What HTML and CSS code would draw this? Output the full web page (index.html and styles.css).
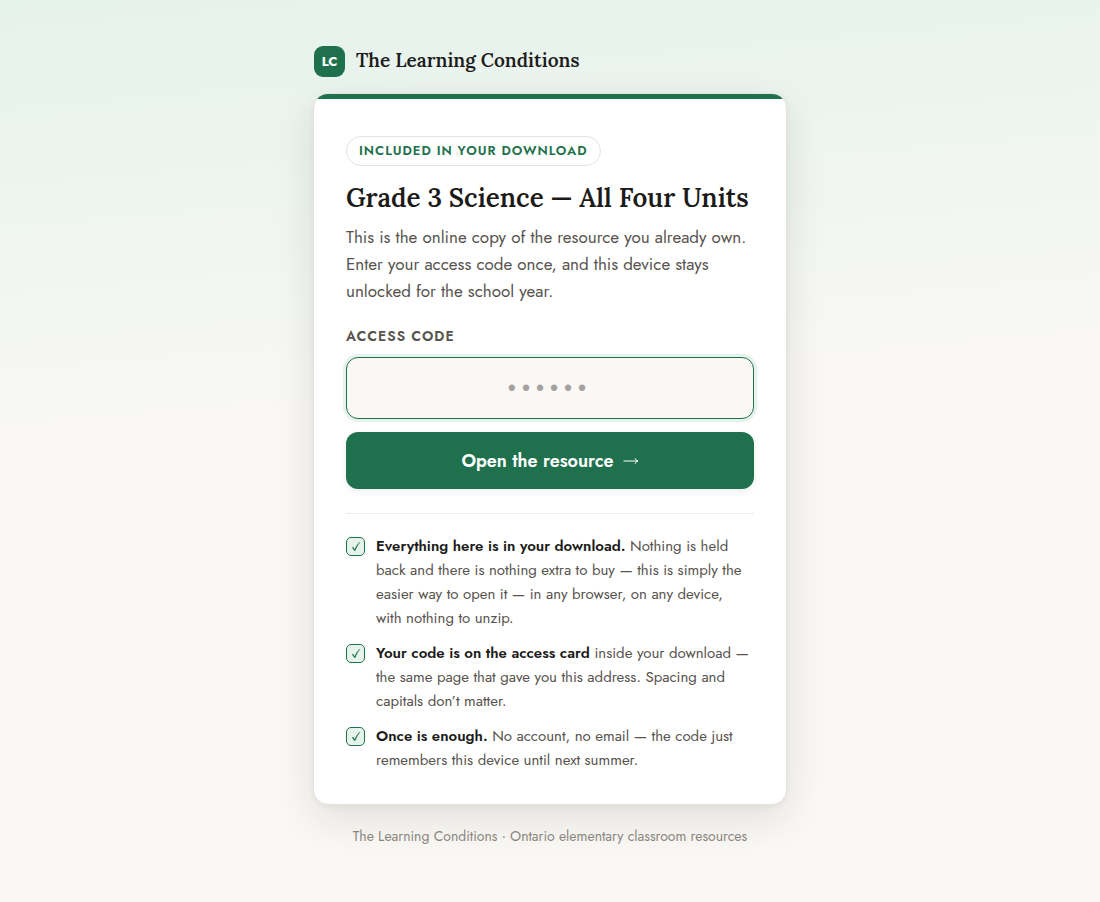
FILE: index.html
```html
<!DOCTYPE html>
<html lang="en">
<head>
<meta charset="utf-8">
<meta name="viewport" content="width=device-width, initial-scale=1">
<title>The Learning Conditions</title>
<link rel="stylesheet" href="styles.css">
</head>
<body>
<div class="page">
  <header class="brand">
    <span class="brand-mark">LC</span>
    <span class="brand-name">The Learning Conditions</span>
  </header>
  <main class="card">
    <div class="card-body">
      <span class="pill">INCLUDED IN YOUR DOWNLOAD</span>
      <h1 class="title">Grade 3 Science — All Four Units</h1>
      <p class="intro">This is the online copy of the resource you already own. Enter your access code once, and this device stays unlocked for the school year.</p>
      <form class="form">
        <label class="label" for="code">ACCESS CODE</label>
        <input class="code" id="code" type="text" placeholder="••••••" autocomplete="off">
        <button class="submit" type="button">Open the resource
          <svg class="arrow" viewBox="0 0 16 10" aria-hidden="true"><path d="M0.5 5H15M12 2.2C12.6 3.8 13.6 4.7 15 5C13.6 5.3 12.6 6.2 12 7.8"/></svg>
        </button>
      </form>
      <ul class="notes">
        <li class="note">
          <span class="tick"><svg viewBox="0 0 12 12" aria-hidden="true"><path d="M2 6.4L3.1 5.7L4.7 8.2C6 5.2 7.7 2.7 10 0.8L10.3 1.1C8.2 3.6 6.7 6.4 5.4 9.8H4.2Z"/></svg></span>
          <p class="note-text"><strong>Everything here is in your download.</strong> Nothing is held back and there is nothing extra to buy — this is simply the easier way to open it — in any browser, on any device, with nothing to unzip.</p>
        </li>
        <li class="note">
          <span class="tick"><svg viewBox="0 0 12 12" aria-hidden="true"><path d="M2 6.4L3.1 5.7L4.7 8.2C6 5.2 7.7 2.7 10 0.8L10.3 1.1C8.2 3.6 6.7 6.4 5.4 9.8H4.2Z"/></svg></span>
          <p class="note-text"><strong>Your code is on the access card</strong> inside your download — the same page that gave you this address. Spacing and capitals don’t matter.</p>
        </li>
        <li class="note">
          <span class="tick"><svg viewBox="0 0 12 12" aria-hidden="true"><path d="M2 6.4L3.1 5.7L4.7 8.2C6 5.2 7.7 2.7 10 0.8L10.3 1.1C8.2 3.6 6.7 6.4 5.4 9.8H4.2Z"/></svg></span>
          <p class="note-text"><strong>Once is enough.</strong> No account, no email — the code just remembers this device until next summer.</p>
        </li>
      </ul>
    </div>
  </main>
  <footer class="footer">The Learning Conditions · Ontario elementary classroom resources</footer>
</div>
</body>
</html>
```
FILE: styles.css
```css
* {
  box-sizing: border-box;
}

body {
  margin: 0;
  min-height: 100vh;
  padding: 46px 20px;
  background: #faf8f4 linear-gradient(175deg, #e6f2ec 0, #e9f3ed 90px, #faf8f4 460px) no-repeat;
  color: #1c1b19;
  font-family: Jost, Lato, sans-serif;
  font-size: 16px;
}

.page {
  max-width: 474px;
  margin: 0 auto;
}

.brand {
  display: flex;
  align-items: center;
  gap: 11px;
  margin-bottom: 16px;
  padding-left: 1px;
}

.brand-mark {
  display: grid;
  place-items: center;
  width: 31px;
  height: 31px;
  border-radius: 9px;
  background: #1f714d;
  color: #fff;
  font-size: 13px;
  font-weight: 700;
}

.brand-name {
  padding-bottom: 3px;
  font-family: Lora, "Liberation Serif", serif;
  font-size: 19px;
  line-height: 28px;
  font-weight: 600;
}

.card {
  overflow: hidden;
  border: 1px solid #e4e2dd;
  border-radius: 15px;
  background: #fff;
  box-shadow: 0 2px 6px rgba(28, 27, 25, 0.04), 0 14px 40px rgba(28, 27, 25, 0.11);
}

.card::before {
  content: "";
  display: block;
  height: 5px;
  background: #1f714d;
}

.card-body {
  padding: 37px 32px 32px;
}

.pill {
  display: inline-block;
  padding: 0 12px;
  border: 1px solid #e4e2dd;
  border-radius: 15px;
  color: #1f714d;
  font-size: 13px;
  line-height: 28px;
  font-weight: 600;
  letter-spacing: 1px;
}

.title {
  margin: 14px 0 8px;
  font-family: Lora, "Liberation Serif", serif;
  font-size: 26px;
  line-height: 36px;
  font-weight: 600;
}

.intro {
  margin: 0 0 21px;
  color: #57534e;
  font-size: 17px;
  line-height: 27px;
}

.form {
  display: flex;
  flex-direction: column;
}

.label {
  margin-bottom: 11px;
  color: #57534e;
  font-size: 14px;
  line-height: 20px;
  font-weight: 600;
  letter-spacing: 1px;
}

.code {
  width: 100%;
  height: 62px;
  margin-bottom: 13px;
  padding: 0 16px;
  border: 1px solid #1f714d;
  border-radius: 12px;
  outline: none;
  background: #faf8f4;
  box-shadow: 0 0 0 3px #e6f2ec;
  color: #1c1b19;
  font-family: "Liberation Sans", Arial, sans-serif;
  font-size: 23px;
  letter-spacing: 6px;
  text-align: center;
}

.code::placeholder {
  color: #a3a19d;
  opacity: 1;
}

.submit {
  display: flex;
  align-items: center;
  justify-content: center;
  gap: 9px;
  height: 57px;
  border: 0;
  border-radius: 12px;
  background: #1f714d;
  box-shadow: 0 2px 6px rgba(28, 27, 25, 0.08);
  color: #fff;
  font-family: Jost, Lato, sans-serif;
  font-size: 18px;
  font-weight: 600;
}

.arrow {
  width: 16px;
  height: 10px;
  fill: none;
  stroke: #fff;
  stroke-width: 1;
}

.notes {
  display: grid;
  gap: 11px;
  margin: 24px 0 0;
  padding: 20px 0 0;
  border-top: 1px solid #eeece8;
  list-style: none;
}

.note {
  display: flex;
  gap: 11px;
}

.tick {
  display: grid;
  flex: none;
  place-items: center;
  width: 19px;
  height: 19px;
  margin-top: 3px;
  border: 1px solid #1f714d;
  border-radius: 5px;
  background: #e6f2ec;
}

.tick svg {
  width: 12px;
  height: 12px;
  fill: #1f714d;
}

.note-text {
  margin: 0;
  padding-right: 3px;
  color: #57534e;
  font-size: 15px;
  line-height: 24px;
}

.note-text strong {
  color: #1c1b19;
  font-weight: 600;
}

.footer {
  margin-top: 20px;
  color: #8a857d;
  font-size: 14px;
  line-height: 22px;
  text-align: center;
}
```
